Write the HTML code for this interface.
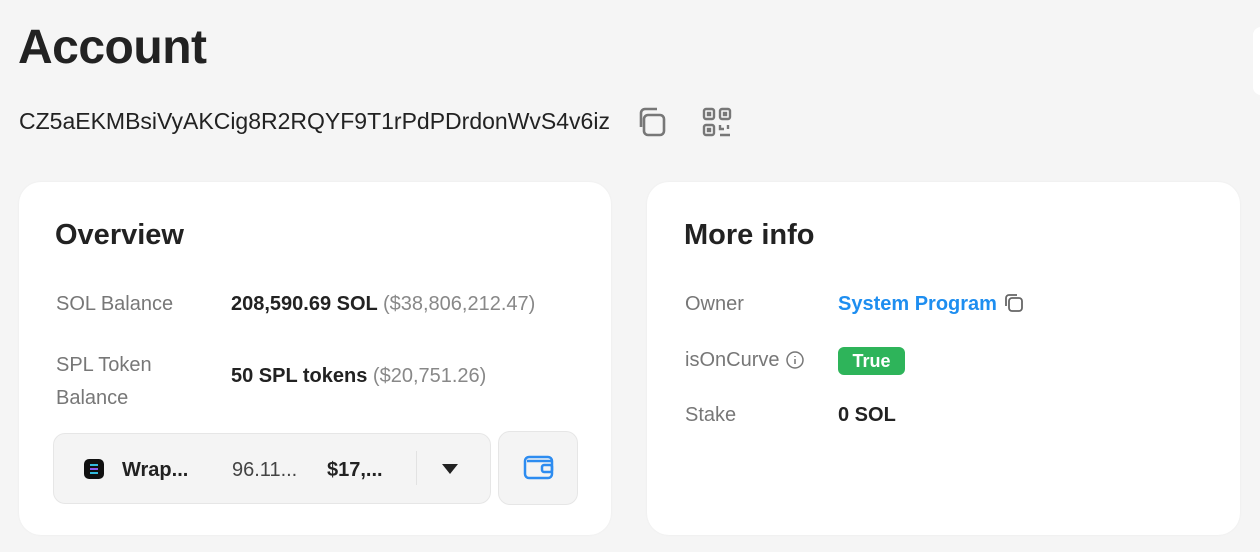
<!DOCTYPE html>
<html><head><style>
body{margin:0;width:1260px;height:552px;background:#f5f5f5;font-family:"Liberation Sans",sans-serif;color:#222;position:relative;overflow:hidden}
.a{position:absolute}
.card{position:absolute;background:#fff;border-radius:22px;box-shadow:0 0 2px rgba(0,0,0,.05)}
.lbl{color:#777;font-size:20px}
.val{font-size:20px;font-weight:bold;color:#222}
.g{color:#888;font-weight:normal}
</style></head><body>
<div class="a" style="left:18px;top:20px;font-size:48px;font-weight:bold;color:#222;letter-spacing:-0.5px">Account</div>
<div class="a" style="left:1253px;top:27px;width:20px;height:68px;background:#fff;border-radius:8px"></div>
<div class="a" style="left:19px;top:108px;font-size:23px;color:#222">CZ5aEKMBsiVyAKCig8R2RQYF9T1rPdPDrdonWvS4v6iz</div>
<svg class="a" style="left:636px;top:106px" width="32" height="32" viewBox="0 0 32 32" fill="none" stroke="#777" stroke-width="2.6"><rect x="8" y="9" width="20" height="20" rx="4"/><path d="M5 21V7a4 4 0 0 1 4-4h12"/></svg>
<svg class="a" style="left:702px;top:107px" width="30" height="30" viewBox="0 0 30 30" fill="none" stroke="#777" stroke-width="2.4"><rect x="2" y="2" width="10" height="10" rx="2"/><rect x="18" y="2" width="10" height="10" rx="2"/><rect x="2" y="18" width="10" height="10" rx="2"/><rect x="6" y="6" width="2" height="2" fill="#777"/><rect x="22" y="6" width="2" height="2" fill="#777"/><rect x="6" y="22" width="2" height="2" fill="#777"/><path d="M18 18v4h4M26 18v4M18 28h10"/></svg>

<div class="card" style="left:19px;top:182px;width:592px;height:353px">
 <div class="a" style="left:36px;top:37px;font-size:29px;font-weight:bold">Overview</div>
 <div class="a lbl" style="left:37px;top:111px">SOL Balance</div>
 <div class="a val" style="left:212px;top:111px">208,590.69 SOL <span class="g">($38,806,212.47)</span></div>
 <div class="a lbl" style="left:37px;top:167px;line-height:33px">SPL Token<br>Balance</div>
 <div class="a val" style="left:212px;top:183px">50 SPL tokens <span class="g">($20,751.26)</span></div>
 <div class="a" style="left:34px;top:251px;width:436px;height:69px;background:#f4f4f4;border:1px solid #e6e6e6;border-radius:12px">
  <div class="a" style="left:30px;top:25px;width:20px;height:20px;background:#111;border-radius:5px"><div style="margin:5px 6px;width:8px;height:2px;background:#3bd;box-shadow:0 4px 0 #8a5cf5,0 8px 0 #3bd"></div></div>
  <div class="a val" style="left:68px;top:25px">Wrap...</div>
  <div class="a" style="left:178px;top:25px;font-size:20px;color:#444">96.11...</div>
  <div class="a val" style="left:273px;top:25px">$17,...</div>
  <div class="a" style="left:362px;top:17px;width:1px;height:34px;background:#e2e2e2"></div>
  <div class="a" style="left:388px;top:30px;width:0;height:0;border-left:8px solid transparent;border-right:8px solid transparent;border-top:10px solid #222"></div>
 </div>
 <div class="a" style="left:479px;top:249px;width:78px;height:72px;background:#f4f4f4;border:1px solid #e6e6e6;border-radius:12px">
  <svg class="a" style="left:24px;top:23px" width="32" height="26" viewBox="0 0 32 26" fill="none" stroke="#2d8cf0" stroke-width="2.5"><rect x="2" y="2" width="27" height="21" rx="4"/><path d="M4 6h24"/><rect x="19" y="10" width="10" height="7" rx="2"/></svg>
 </div>
</div>

<div class="card" style="left:647px;top:182px;width:593px;height:353px">
 <div class="a" style="left:37px;top:37px;font-size:29px;font-weight:bold">More info</div>
 <div class="a lbl" style="left:38px;top:111px">Owner</div>
 <div class="a val" style="left:191px;top:111px;color:#1e8ef0">System Program</div>
 <svg class="a" style="left:356px;top:110px" width="22" height="22" viewBox="0 0 22 22" fill="none" stroke="#666" stroke-width="1.8"><rect x="6" y="6" width="13" height="13" rx="3"/><path d="M3 14V6a3 3 0 0 1 3-3h8"/></svg>
 <div class="a lbl" style="left:38px;top:167px">isOnCurve</div>
 <svg class="a" style="left:138px;top:168px" width="20" height="20" viewBox="0 0 20 20" fill="none" stroke="#777" stroke-width="1.5"><circle cx="10" cy="10" r="8"/><path d="M10 9v5M10 6v1"/></svg>
 <div class="a" style="left:191px;top:165px;width:67px;height:28px;background:#2eb45a;border-radius:6px;color:#fff;font-weight:bold;font-size:18px;text-align:center;line-height:28px">True</div>
 <div class="a lbl" style="left:38px;top:222px">Stake</div>
 <div class="a val" style="left:191px;top:222px">0 SOL</div>
</div>
</body></html>
